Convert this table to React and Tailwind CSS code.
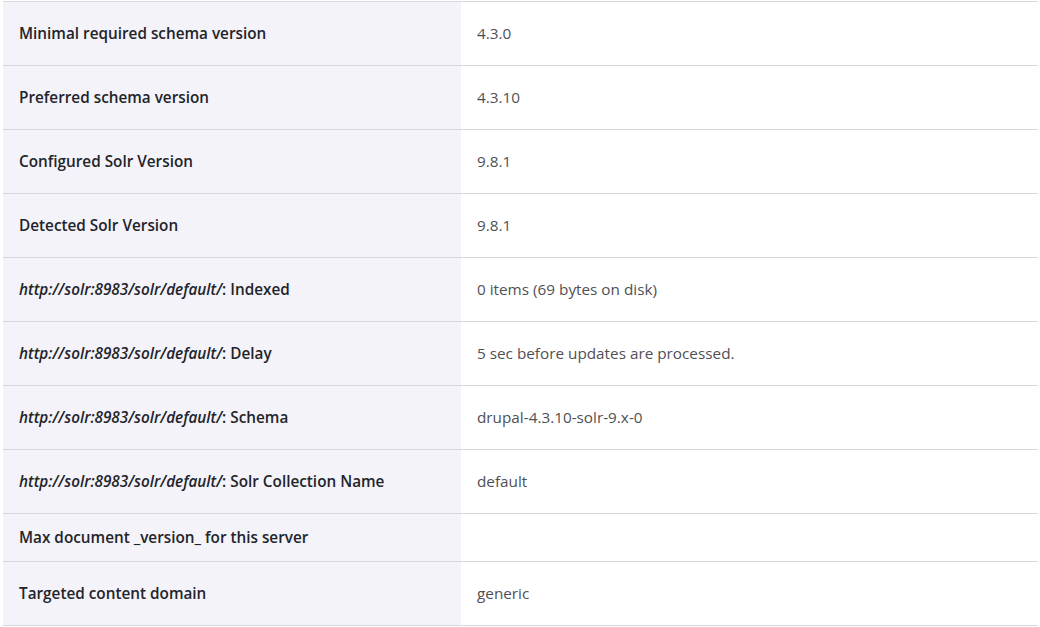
import React from 'react'

const rows = [
  { label: 'Minimal required schema version', value: '4.3.0' },
  { label: 'Preferred schema version', value: '4.3.10' },
  { label: 'Configured Solr Version', value: '9.8.1' },
  { label: 'Detected Solr Version', value: '9.8.1' },
  { url: true, label: 'Indexed', value: '0 items (69 bytes on disk)' },
  { url: true, label: 'Delay', value: '5 sec before updates are processed.' },
  { url: true, label: 'Schema', value: 'drupal-4.3.10-solr-9.x-0' },
  { url: true, label: 'Solr Collection Name', value: 'default' },
  { label: 'Max document _version_ for this server', value: '', short: true },
  { label: 'Targeted content domain', value: 'generic' },
]

export default function App() {
  return (
    <div className="bg-white w-[1040px] h-[627px] overflow-hidden pl-[3px] pr-[2px] pt-px" style={{ fontFamily: '"Open Sans", "Noto Sans", sans-serif' }}>
      <table className="w-full border-collapse border-t border-[#d8d8dc]">
        <tbody>
          {rows.map((r, i) => (
            <tr key={i} className={`border-b border-[#d8d8dc] ${r.short ? 'h-[48px]' : 'h-[64px]'}`}>
              <td className="w-[458px] bg-[#f3f3f9] px-4 align-middle text-[15.3px] font-semibold text-[#232429]">
                {r.url && <em className="italic">http://solr:8983/solr/default/</em>}
                {r.url ? ': ' : ''}
                {r.label}
              </td>
              <td className="px-4 align-middle text-[15.3px] text-[#4f5055]">{r.value}</td>
            </tr>
          ))}
        </tbody>
      </table>
    </div>
  )
}
